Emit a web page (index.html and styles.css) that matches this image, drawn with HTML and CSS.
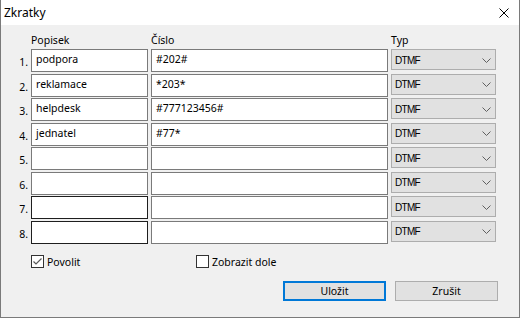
FILE: index.html
```
<!DOCTYPE html>
<html lang="cs">
<head>
    <meta charset="UTF-8">
    <title>Zkratky</title>
    <link rel="stylesheet" href="styles.css">
</head>
<body>
    <div class="window">
        <div class="titlebar">
            <span class="title">Zkratky</span>
            <svg class="close" width="10" height="10" viewBox="0 0 10 10">
                <path d="M0.5 0.5 L9.5 9.5 M9.5 0.5 L0.5 9.5" stroke="#000" stroke-width="1" fill="none"/>
            </svg>
        </div>

        <div class="content">
            <div class="grid">
                <div class="head"></div>
                <div class="head">Popisek</div>
                <div class="head">Číslo</div>
                <div class="head">Typ</div>

                <div class="num">1.</div>
                <div class="field">podpora</div>
                <div class="field">#202#</div>
                <div class="select">DTMF<svg class="chev" width="9" height="5" viewBox="0 0 9 5"><path d="M0.5 0.5 L4.5 4.5 L8.5 0.5" stroke="#606060" fill="none"/></svg></div>

                <div class="num">2.</div>
                <div class="field">reklamace</div>
                <div class="field">*203*</div>
                <div class="select">DTMF<svg class="chev" width="9" height="5" viewBox="0 0 9 5"><path d="M0.5 0.5 L4.5 4.5 L8.5 0.5" stroke="#606060" fill="none"/></svg></div>

                <div class="num">3.</div>
                <div class="field">helpdesk</div>
                <div class="field">#777123456#</div>
                <div class="select">DTMF<svg class="chev" width="9" height="5" viewBox="0 0 9 5"><path d="M0.5 0.5 L4.5 4.5 L8.5 0.5" stroke="#606060" fill="none"/></svg></div>

                <div class="num">4.</div>
                <div class="field">jednatel</div>
                <div class="field">#77*</div>
                <div class="select">DTMF<svg class="chev" width="9" height="5" viewBox="0 0 9 5"><path d="M0.5 0.5 L4.5 4.5 L8.5 0.5" stroke="#606060" fill="none"/></svg></div>

                <div class="num">5.</div>
                <div class="field"></div>
                <div class="field"></div>
                <div class="select">DTMF<svg class="chev" width="9" height="5" viewBox="0 0 9 5"><path d="M0.5 0.5 L4.5 4.5 L8.5 0.5" stroke="#606060" fill="none"/></svg></div>

                <div class="num">6.</div>
                <div class="field"></div>
                <div class="field"></div>
                <div class="select">DTMF<svg class="chev" width="9" height="5" viewBox="0 0 9 5"><path d="M0.5 0.5 L4.5 4.5 L8.5 0.5" stroke="#606060" fill="none"/></svg></div>

                <div class="num">7.</div>
                <div class="field dark"></div>
                <div class="field"></div>
                <div class="select">DTMF<svg class="chev" width="9" height="5" viewBox="0 0 9 5"><path d="M0.5 0.5 L4.5 4.5 L8.5 0.5" stroke="#606060" fill="none"/></svg></div>

                <div class="num">8.</div>
                <div class="field dark"></div>
                <div class="field"></div>
                <div class="select">DTMF<svg class="chev" width="9" height="5" viewBox="0 0 9 5"><path d="M0.5 0.5 L4.5 4.5 L8.5 0.5" stroke="#606060" fill="none"/></svg></div>
            </div>

            <div class="options">
                <label class="check check-povolit">
                    <span class="box">
                        <svg width="11" height="11" viewBox="0 0 11 11"><path d="M1.5 5.5 L4 8 L9.5 2.5" stroke="#5a5a5a" stroke-width="1.2" fill="none"/></svg>
                    </span>
                    Povolit
                </label>
                <label class="check">
                    <span class="box"></span>
                    Zobrazit dole
                </label>
            </div>

            <div class="buttons">
                <button class="btn default">Uložit</button>
                <button class="btn">Zrušit</button>
            </div>
        </div>
    </div>
</body>
</html>
```

FILE: styles.css
```
* {
    box-sizing: border-box;
}
body {
    margin: 0;
    font-family: "Noto Sans", "Open Sans", sans-serif;
    font-size: 10.5px;
    color: #000;
}
.window {
    width: 520px;
    height: 318px;
    background: #f0f0f0;
    border: 1px solid #7a7a7a;
    border-top: none;
}
.titlebar {
    height: 25px;
    background: #fff;
    display: flex;
    align-items: center;
    justify-content: space-between;
    padding: 0 10px 0 3px;
}
.title {
    font-size: 12px;
}
.close {
    margin-top: 1px;
}
.content {
    padding: 7px 0 0 4px;
}
.grid {
    display: grid;
    grid-template-columns: 23px 117px 237px 105px;
    grid-template-rows: 16px;
    grid-auto-rows: 23px;
    column-gap: 3px;
    row-gap: 1.45px;
}
.head {
    line-height: 16px;
    margin-bottom: 8px;
}
.num {
    text-align: right;
    line-height: 23px;
    padding-top: 2px;
}
.field {
    background: #fff;
    border: 1px solid #7a7a7a;
    padding: 0 4px;
    line-height: 19px;
    white-space: nowrap;
}
.field.dark {
    border-color: #1e1e1e;
}
.select {
    height: 21px;
    background: #e1e1e1;
    border: 1px solid #adadad;
    display: flex;
    align-items: center;
    justify-content: space-between;
    padding: 1px 4px 0 3px;
    font-family: "Liberation Sans", Arial, sans-serif;
    font-size: 10px;
    letter-spacing: -0.7px;
}
.options {
    display: flex;
    margin-top: 11px;
    padding-left: 26px;
}
.check {
    display: flex;
    align-items: center;
    gap: 3px;
    width: 165px;
}
.box {
    width: 13px;
    height: 13px;
    border: 1px solid #333;
    background: #fff;
    display: flex;
    align-items: center;
    justify-content: center;
}
.buttons {
    display: flex;
    justify-content: flex-end;
    gap: 9px;
    margin-top: 12px;
    padding-right: 21px;
}
.btn {
    width: 103px;
    height: 20px;
    background: #e1e1e1;
    border: 1px solid #adadad;
    font-family: inherit;
    font-size: 10.5px;
    padding: 0;
    color: #000;
}
.btn.default {
    border: 2px solid #0078d7;
}
```
